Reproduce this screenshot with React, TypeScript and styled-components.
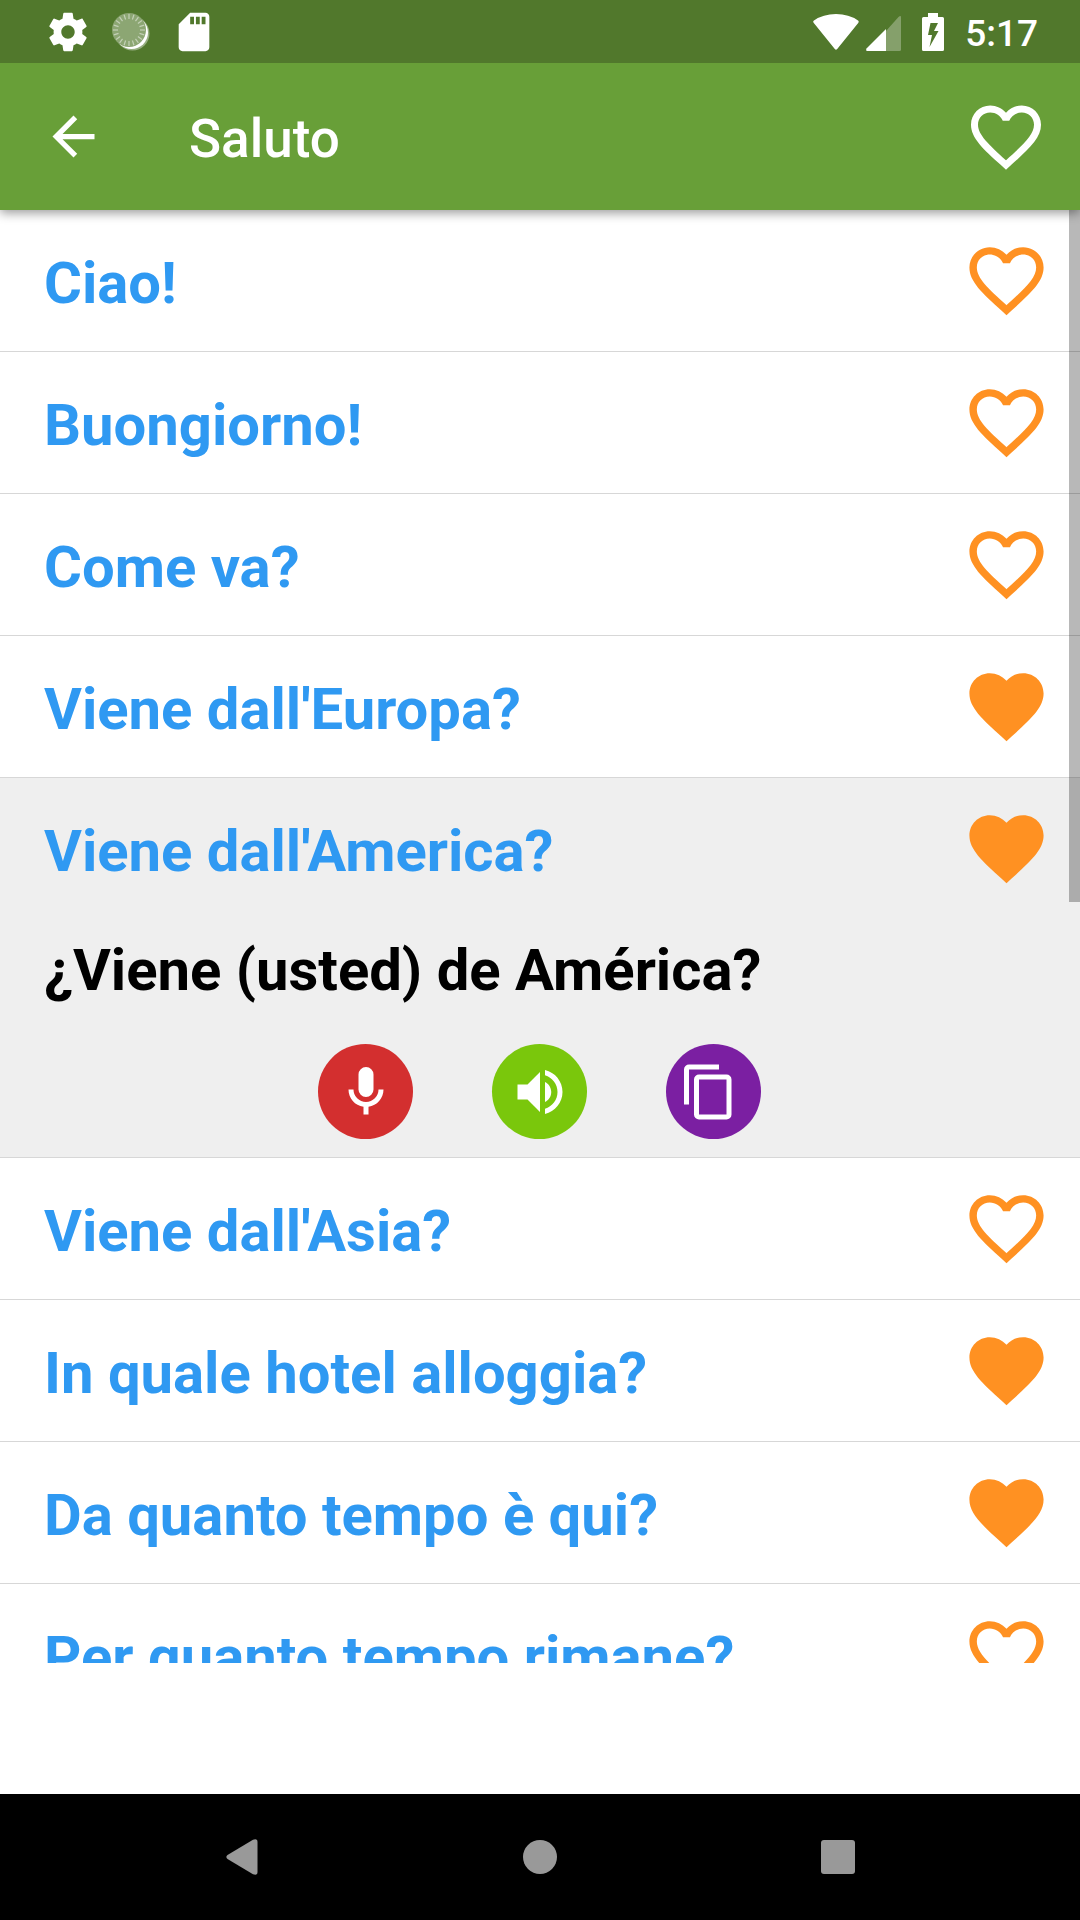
import React from "react";
import styled, { createGlobalStyle } from "styled-components";

const GlobalStyle = createGlobalStyle`
  *, *::before, *::after { box-sizing: border-box; }
  body { margin: 0; background: #fff; font-family: Roboto, "Liberation Sans", sans-serif; }
  button { appearance: none; border: 0; margin: 0; padding: 0; background: none; color: inherit; font: inherit; text-align: left; cursor: pointer; }
  svg { display: block; flex: none; }
  h1, p, ul { margin: 0; padding: 0; }
`;

const Screen = styled.div`
  display: flex;
  flex-direction: column;
  height: 100vh;
  overflow: hidden;
  background: #fff;
`;

const StatusBar = styled.header`
  display: flex;
  align-items: center;
  justify-content: space-between;
  flex: none;
  height: 63px;
  padding: 0 42px 0 45px;
  background: #51782c;
  color: #fff;
  position: relative;
  z-index: 2;
`;

const StatusGroup = styled.div<{ $gap: number }>`
  display: flex;
  align-items: center;
  gap: ${(p) => p.$gap}px;
`;

const Clock = styled.time`
  padding-top: 4px;
  font-size: 37px;
  line-height: 44px;
  font-weight: 500;
`;

const Toolbar = styled.nav`
  display: flex;
  align-items: center;
  flex: none;
  height: 147px;
  padding: 0 32px 0 42px;
  background: #689f38;
  color: #fff;
  box-shadow: 0 3px 10px rgba(0, 0, 0, 0.4);
  position: relative;
  z-index: 1;
`;

const Title = styled.h1`
  flex: 1;
  padding: 4px 0 0 84px;
  font-size: 53px;
  line-height: 62px;
  font-weight: 500;
`;

const ListPane = styled.main`
  position: relative;
  flex: 1;
  min-height: 0;
  margin-bottom: 131px;
  overflow: hidden;
`;

const PhraseList = styled.ul`
  list-style: none;
`;

const Item = styled.li<{ $open: boolean }>`
  border-bottom: 1px solid #d7d7d7;
  background: ${(p) => (p.$open ? "#efefef" : "#fff")};
`;

const Row = styled.div`
  display: flex;
  align-items: center;
  padding: 26px 29px 26px 44px;
`;

const Phrase = styled.button`
  flex: 1;
  padding-top: 5px;
  font-size: 58px;
  line-height: 68px;
  font-weight: 700;
  color: #2f99f2;
`;

const Favorite = styled.button<{ $color: string }>`
  color: ${(p) => p.$color};
`;

const Translation = styled.p`
  padding: 17px 44px 40px;
  font-size: 58px;
  line-height: 68px;
  font-weight: 700;
  color: #000;
`;

const Actions = styled.div`
  display: flex;
  justify-content: center;
  gap: 79px;
  padding: 0 1px 18px 0;
`;

const RoundButton = styled.button<{ $color: string }>`
  display: grid;
  place-items: center;
  width: 95px;
  height: 95px;
  border-radius: 50%;
  background: ${(p) => p.$color};
  color: #fff;
`;

const ScrollThumb = styled.div`
  position: absolute;
  top: 0;
  right: 0;
  width: 11px;
  height: 692px;
  background: rgba(0, 0, 0, 0.28);
`;

const SystemNav = styled.footer`
  display: flex;
  justify-content: center;
  flex: none;
  height: 126px;
  padding-right: 1px;
  background: #000;
  color: #999;
`;

const SystemButton = styled.button`
  display: grid;
  place-items: center;
  flex: 0 1 298px;
`;

const HEART =
  "M12,21.35L10.55,20.03C5.4,15.36 2,12.27 2,8.5C2,5.41 4.42,3 7.5,3C9.24,3 10.91,3.81 12,5.08C13.09,3.81 14.76,3 16.5,3C19.58,3 22,5.41 22,8.5C22,12.27 18.6,15.36 13.45,20.03L12,21.35Z";
const HEART_OUTLINE =
  "M12.1,18.55L12,18.65L11.89,18.55C7.14,14.24 4,11.39 4,8.5C4,6.5 5.5,5 7.5,5C9.04,5 10.54,6 11.07,7.36H12.93C13.46,6 14.96,5 16.5,5C18.5,5 20,6.5 20,8.5C20,11.39 16.86,14.24 12.1,18.55M16.5,3C14.76,3 13.09,3.81 12,5.08C10.91,3.81 9.24,3 7.5,3C4.42,3 2,5.41 2,8.5C2,12.27 5.4,15.36 10.55,20.03L12,21.35L13.45,20.03C18.6,15.36 22,12.27 22,8.5C22,5.41 19.58,3 16.5,3Z";
const ARROW_BACK = "M20 11H7.83l5.59-5.59L12 4l-8 8 8 8 1.41-1.41L7.83 13H20v-2z";
const MIC =
  "M12,2A3,3 0 0,1 15,5V11A3,3 0 0,1 12,14A3,3 0 0,1 9,11V5A3,3 0 0,1 12,2M19,11C19,14.53 16.39,17.44 13,17.93V21H11V17.93C7.61,17.44 5,14.53 5,11H7A5,5 0 0,0 12,16A5,5 0 0,0 17,11H19Z";
const VOLUME =
  "M14,3.23V5.29C16.89,6.15 19,8.83 19,12C19,15.17 16.89,17.84 14,18.7V20.77C18,19.86 21,16.28 21,12C21,7.72 18,4.14 14,3.23M16.5,12C16.5,10.23 15.5,8.71 14,7.97V16C15.5,15.29 16.5,13.76 16.5,12M3,9V15H7L12,20V4L7,9H3Z";
const COPY =
  "M19,21H8V7H19M19,5H8A2,2 0 0,0 6,7V21A2,2 0 0,0 8,23H19A2,2 0 0,0 21,21V7A2,2 0 0,0 19,5M16,1H4A2,2 0 0,0 2,3V17H4V3H16V1Z";
const GEAR =
  "M19.43 12.98c.04-.32.07-.64.07-.98s-.03-.66-.07-.98l2.11-1.65c.19-.15.24-.42.12-.64l-2-3.46c-.12-.22-.39-.3-.61-.22l-2.49 1c-.52-.4-1.08-.73-1.69-.98l-.38-2.65C14.46 2.18 14.25 2 14 2h-4c-.25 0-.46.18-.49.42l-.38 2.65c-.61.25-1.17.59-1.69.98l-2.49-1c-.23-.09-.49 0-.61.22l-2 3.46c-.13.22-.07.49.12.64l2.11 1.65c-.04.32-.07.65-.07.98s.03.66.07.98l-2.11 1.65c-.19.15-.24.42-.12.64l2 3.46c.12.22.39.3.61.22l2.49-1c.52.4 1.08.73 1.69.98l.38 2.65c.03.24.24.42.49.42h4c.25 0 .46-.18.49-.42l.38-2.65c.61-.25 1.17-.59 1.69-.98l2.49 1c.23.09.49 0 .61-.22l2-3.46c.12-.22.07-.49-.12-.64l-2.11-1.65zM12 15.5c-1.93 0-3.5-1.57-3.5-3.5s1.57-3.5 3.5-3.5 3.5 1.57 3.5 3.5-1.57 3.5-3.5 3.5z";
const SD_CARD =
  "M18 2h-8L4.02 8 4 20c0 1.1.9 2 2 2h12c1.1 0 2-.9 2-2V4c0-1.1-.9-2-2-2zm-6 6h-2V4h2v4zm3 0h-2V4h2v4zm3 0h-2V4h2v4z";

function Icon({ d, size, viewBox = "0 0 24 24" }: { d: string; size: number; viewBox?: string }) {
  return (
    <svg width={size} height={size} viewBox={viewBox} fill="currentColor" aria-hidden="true">
      <path d={d} />
    </svg>
  );
}

function SyncIcon() {
  const ticks = Array.from({ length: 20 }, (_, i) => i * 18);
  return (
    <svg width="38" height="38" viewBox="0 0 38 38" aria-hidden="true">
      <circle cx="20.5" cy="20.5" r="17" fill="#fff" fillOpacity="0.4" />
      <circle cx="19.5" cy="19.5" r="16.5" fill="#fff" />
      <circle cx="17" cy="17" r="17" fill="#8ca673" />
      {ticks.map((a) => (
        <path key={a} d="M17 1V6" stroke="#c3d0b6" strokeWidth="1.2" transform={`rotate(${a} 17 17)`} />
      ))}
    </svg>
  );
}

interface Entry {
  text: string;
  favorite: boolean;
  translation?: string;
}

const entries: Entry[] = [
  { text: "Ciao!", favorite: false },
  { text: "Buongiorno!", favorite: false },
  { text: "Come va?", favorite: false },
  { text: "Viene dall'Europa?", favorite: true },
  { text: "Viene dall'America?", favorite: true, translation: "¿Viene (usted) de América?" },
  { text: "Viene dall'Asia?", favorite: false },
  { text: "In quale hotel alloggia?", favorite: true },
  { text: "Da quanto tempo è qui?", favorite: true },
  { text: "Per quanto tempo rimane?", favorite: false },
];

function PhraseItem({ entry }: { entry: Entry }) {
  const open = entry.translation !== undefined;
  return (
    <Item $open={open}>
      <Row>
        <Phrase type="button" aria-expanded={open}>{entry.text}</Phrase>
        <Favorite type="button" $color="#ff9122" aria-pressed={entry.favorite} aria-label="Preferito">
          <Icon d={entry.favorite ? HEART : HEART_OUTLINE} size={89} />
        </Favorite>
      </Row>
      {open && (
        <>
          <Translation lang="es">{entry.translation}</Translation>
          <Actions>
            <RoundButton type="button" $color="#d32f2f" aria-label="Registra"><Icon d={MIC} size={60} /></RoundButton>
            <RoundButton type="button" $color="#7ac70c" aria-label="Ascolta"><Icon d={VOLUME} size={60} /></RoundButton>
            <RoundButton type="button" $color="#7b1fa2" aria-label="Copia"><Icon d={COPY} size={60} viewBox="2 0 24 24" /></RoundButton>
          </Actions>
        </>
      )}
    </Item>
  );
}

export default function App() {
  return (
    <Screen>
      <GlobalStyle />
      <StatusBar>
        <StatusGroup $gap={21}>
          <Icon d={GEAR} size={46} />
          <SyncIcon />
          <Icon d={SD_CARD} size={46} />
        </StatusGroup>
        <StatusGroup $gap={21}>
          <svg width="88" height="38" viewBox="0 0 88 38" fill="#fff" aria-hidden="true">
            <path d="M.8 10Q-.5 8.600 1 7.500Q10 1 23 1T45 7.500Q46.300 8.600 45.200 10L24.200 36Q23 37.500 21.800 36Z" />
            <path fillOpacity="0.3" d="M73 18L85.500 4Q88 2 88 4.500V36.500Q88 38 86.500 38H73Z" />
            <path d="M73 16V38H54Q52.300 37.500 53.500 35.500Z" />
          </svg>
          <svg width="22" height="38" viewBox="0 0 22 38" fill="#fff" aria-hidden="true">
            <path fillRule="evenodd" d="M6 0H16V4H20.500Q22 4 22 5.500V36.500Q22 38 20.500 38H1.500Q0 38 0 36.500V5.500Q0 4 1.500 4H6ZM8.500 10L6 22H10L7.500 34L16.500 18H12L16 10Z" />
          </svg>
          <Clock>5:17</Clock>
        </StatusGroup>
      </StatusBar>
      <Toolbar>
        <button type="button" aria-label="Indietro"><Icon d={ARROW_BACK} size={63} /></button>
        <Title>Saluto</Title>
        <Favorite type="button" $color="#fff" aria-label="Preferiti"><Icon d={HEART_OUTLINE} size={84} /></Favorite>
      </Toolbar>
      <ListPane>
        <PhraseList>
          {entries.map((entry) => <PhraseItem key={entry.text} entry={entry} />)}
        </PhraseList>
        <ScrollThumb />
      </ListPane>
      <SystemNav>
        <SystemButton type="button" aria-label="Back">
          <svg width="32" height="36" viewBox="0 0 32 36" fill="currentColor"><path d="M1.500 16L27 .8Q31.500-.8 31.500 3V33Q31.500 36.800 27 35.200L1.500 20Q-.8 18 1.500 16Z" /></svg>
        </SystemButton>
        <SystemButton type="button" aria-label="Home">
          <svg width="34" height="34" viewBox="0 0 34 34" fill="currentColor"><circle cx="17" cy="17" r="17" /></svg>
        </SystemButton>
        <SystemButton type="button" aria-label="Recents">
          <svg width="34" height="34" viewBox="0 0 34 34" fill="currentColor"><rect width="34" height="34" rx="3" /></svg>
        </SystemButton>
      </SystemNav>
    </Screen>
  );
}
